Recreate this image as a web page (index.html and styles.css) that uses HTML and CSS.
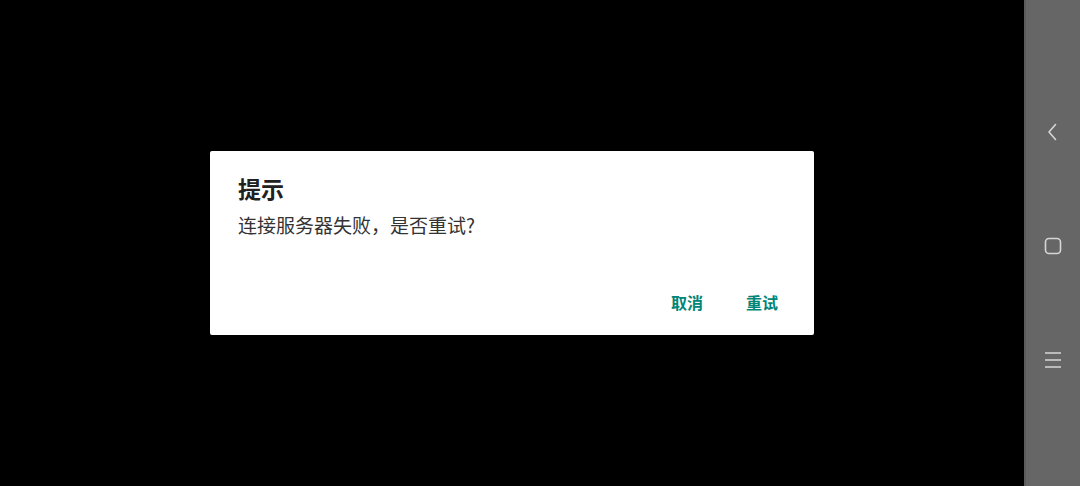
FILE: index.html
```html
<!DOCTYPE html>
<html lang="zh-CN">
<head>
    <meta charset="UTF-8">
    <meta name="viewport" content="width=device-width, initial-scale=1.0">
    <title>提示</title>
    <link rel="stylesheet" href="styles.css">
</head>
<body>
    <div class="screen">
        <div class="dialog">
            <h1 class="dialog-title">提示</h1>
            <p class="dialog-message">连接服务器失败，是否重试?</p>
            <div class="dialog-actions">
                <button class="dialog-btn">取消</button>
                <button class="dialog-btn">重试</button>
            </div>
        </div>
    </div>
    <div class="nav-bar">
        <svg class="nav-icon" width="20" height="20" viewBox="0 0 20 20">
            <path d="M12.5 2.5 L6 10 L12.5 17.5" fill="none" stroke="#d6d6d6" stroke-width="1.6" stroke-linecap="round" stroke-linejoin="round"/>
        </svg>
        <svg class="nav-icon" width="20" height="20" viewBox="0 0 20 20">
            <rect x="2.5" y="2.5" width="15" height="15" rx="3.5" fill="none" stroke="#d6d6d6" stroke-width="1.6"/>
        </svg>
        <svg class="nav-icon" width="20" height="20" viewBox="0 0 20 20">
            <path d="M2 3h16M2 10h16M2 17h16" fill="none" stroke="#d6d6d6" stroke-width="1.6"/>
        </svg>
    </div>
</body>
</html>
```

FILE: styles.css
```css
html, body {
    margin: 0;
    height: 100%;
}
body {
    display: flex;
    background-color: #000;
    font-family: "Noto Sans CJK SC", "Noto Sans", sans-serif;
    overflow: hidden;
}
.screen {
    flex: 1;
    display: flex;
    align-items: center;
    justify-content: center;
}
.dialog {
    box-sizing: border-box;
    width: 604px;
    height: 184px;
    background-color: #fff;
    border-radius: 2px;
    padding: 21px 28px 15px;
    display: flex;
    flex-direction: column;
}
.dialog-title {
    margin: 0;
    font-size: 23px;
    line-height: 32px;
    font-weight: 700;
    color: #212121;
}
.dialog-message {
    margin: 8px 0 0;
    font-size: 19px;
    line-height: 26px;
    color: #333;
}
.dialog-actions {
    margin-top: auto;
    display: flex;
    justify-content: flex-end;
    gap: 27px;
}
.dialog-btn {
    height: 36px;
    padding: 0 8px;
    border: none;
    background: none;
    font-family: inherit;
    font-size: 16px;
    font-weight: 700;
    color: #008577;
}
.nav-bar {
    width: 54px;
    border-left: 2px solid #5c5c5c;
    background-color: #666;
    display: flex;
    flex-direction: column;
    align-items: center;
    justify-content: space-between;
    padding: 122px 0 116px;
}
.nav-icon {
    display: block;
}
```
